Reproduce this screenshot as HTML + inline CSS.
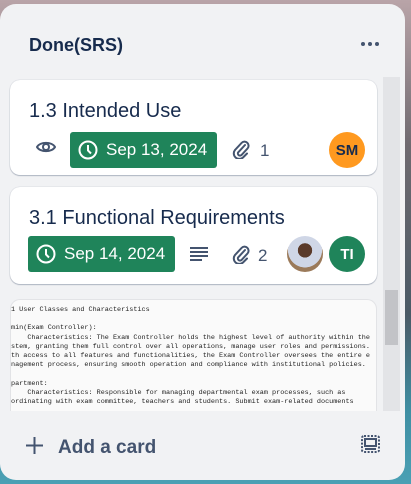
<!DOCTYPE html>
<html><head><meta charset="utf-8"><style>
*{margin:0;padding:0;box-sizing:border-box}
html,body{width:411px;height:484px;overflow:hidden;font-family:"Liberation Sans",sans-serif}
body{background:linear-gradient(180deg,#b9a4a8 0%,#6f6a70 30%,#4a5a66 65%,#3f8fa3 85%,#4aa0b4 100%);position:relative}
.panel{position:absolute;left:0;top:4px;width:405px;height:476px;background:#f1f2f4;border-radius:16px}
.title{position:absolute;left:29px;top:31px;font-size:18px;font-weight:bold;color:#172b4d}
.dots{position:absolute;left:361px;top:38px;width:18px;height:4px}
.dots i{position:absolute;top:0;width:4px;height:4px;border-radius:50%;background:#44546f}
.card{position:absolute;left:10px;width:367px;background:#fff;border-radius:10px;box-shadow:0 1px 1px #091e4240,0 0 1px #091e424f}
.ct{position:absolute;left:19px;font-size:20px;color:#172b4d}
.badge{position:absolute;height:36px;background:#1f845a;border-radius:3px;color:#fff;font-size:17px;display:flex;align-items:center}
.badge svg{margin:0 8px 0 8px}
.av{position:absolute;width:36px;height:36px;border-radius:50%;display:flex;align-items:center;justify-content:center;font-weight:bold;font-size:15px}
.num{position:absolute;font-size:17px;color:#44546f}
.sb{position:absolute;left:383px;top:73px;width:17px;height:334px;background:#e3e4e7}
.thumb{position:absolute;left:385px;top:290px;width:13px;height:55px;background:#c2c3c7}
.img{position:absolute;left:10px;top:295px;width:367px;height:112px;background:#fafafa;border:1px solid #e2e3e6;border-bottom:none;border-radius:10px 10px 0 0;overflow:hidden;font-family:"Liberation Mono",monospace;font-size:6.8px;color:#222;line-height:9.2px;white-space:pre;padding:6px 0 0 0}
.add{position:absolute;left:58px;top:433px;font-size:19px;font-weight:bold;color:#44546f}
</style></head><body>
<div class="panel">
<div class="title">Done(SRS)</div>
<div class="dots"><i style="left:0"></i><i style="left:7px"></i><i style="left:14px"></i></div>

<div class="card" style="top:76px;height:95px">
<div class="ct" style="top:20px">1.3 Intended Use</div>
<svg style="position:absolute;left:26px;top:60px" width="20" height="14" viewBox="0 0 20 14"><path d="M1 7C4 1.5 16 1.5 19 7C16 12.5 4 12.5 1 7Z" fill="none" stroke="#44546f" stroke-width="2"/><circle cx="10" cy="7" r="3" fill="none" stroke="#44546f" stroke-width="2"/></svg>
<div class="badge" style="left:60px;top:52px;width:147px"><svg width="20" height="20" viewBox="0 0 20 20"><circle cx="10" cy="10" r="8.5" fill="none" stroke="#fff" stroke-width="2"/><path d="M10 5v5.5l3 3" fill="none" stroke="#fff" stroke-width="2"/></svg>Sep 13, 2024</div>
<svg style="position:absolute;left:222px;top:59px" width="18" height="20" viewBox="0 0 18 20"><path d="M13 6L6.5 13a2 2 0 0 0 3 3l6-6.5a4 4 0 0 0-6-5.5L3 11a5.5 5.5 0 0 0 8 7.5l4-4" fill="none" stroke="#44546f" stroke-width="2" stroke-linecap="round"/></svg>
<div class="num" style="left:250px;top:61px">1</div>
<div class="av" style="left:319px;top:52px;background:#ff991f;color:#172b4d">SM</div>
</div>

<div class="card" style="top:183px;height:97px">
<div class="ct" style="top:20px">3.1 Functional Requirements</div>
<div class="badge" style="left:18px;top:49px;width:147px"><svg width="20" height="20" viewBox="0 0 20 20"><circle cx="10" cy="10" r="8.5" fill="none" stroke="#fff" stroke-width="2"/><path d="M10 5v5.5l3 3" fill="none" stroke="#fff" stroke-width="2"/></svg>Sep 14, 2024</div>
<svg style="position:absolute;left:180px;top:60px" width="18" height="14" viewBox="0 0 18 14"><path d="M0 1h18M0 5h18M0 9h18M0 13h12" stroke="#44546f" stroke-width="2"/></svg>
<svg style="position:absolute;left:222px;top:57px" width="18" height="20" viewBox="0 0 18 20"><path d="M13 6L6.5 13a2 2 0 0 0 3 3l6-6.5a4 4 0 0 0-6-5.5L3 11a5.5 5.5 0 0 0 8 7.5l4-4" fill="none" stroke="#44546f" stroke-width="2" stroke-linecap="round"/></svg>
<div class="num" style="left:248px;top:59px">2</div>
<div class="av" style="left:277px;top:49px;background:radial-gradient(circle at 50% 40%,#5a3a2a 0 25%,#cfd6e6 26% 60%,#9b7a5a 61%)"></div>
<div class="av" style="left:319px;top:49px;background:#1f845a;color:#fff">TI</div>
</div>

<div class="img">1 User Classes and Characteristics

min(Exam Controller):
    Characteristics: The Exam Controller holds the highest level of authority within the
stem, granting them full control over all operations, manage user roles and permissions.
th access to all features and functionalities, the Exam Controller oversees the entire e
nagement process, ensuring smooth operation and compliance with institutional policies.

partment:
    Characteristics: Responsible for managing departmental exam processes, such as
ordinating with exam committee, teachers and students. Submit exam-related documents</div>

<div class="sb"></div><div class="thumb" style="top:286px"></div>

<svg style="position:absolute;left:25px;top:432px" width="19" height="19" viewBox="0 0 19 19"><path d="M9.5 1v17M1 9.5h17" stroke="#44546f" stroke-width="2"/></svg>
<div class="add">Add a card</div>
<svg style="position:absolute;left:361px;top:431px" width="19" height="18" viewBox="0 0 19 18"><rect x="1" y="1" width="17" height="16" rx="2" fill="none" stroke="#44546f" stroke-width="2" stroke-dasharray="2 1.5"/><rect x="4" y="4" width="11" height="7" fill="none" stroke="#44546f" stroke-width="2"/><path d="M4 14h11" stroke="#44546f" stroke-width="2"/></svg>
</div>
</body></html>
